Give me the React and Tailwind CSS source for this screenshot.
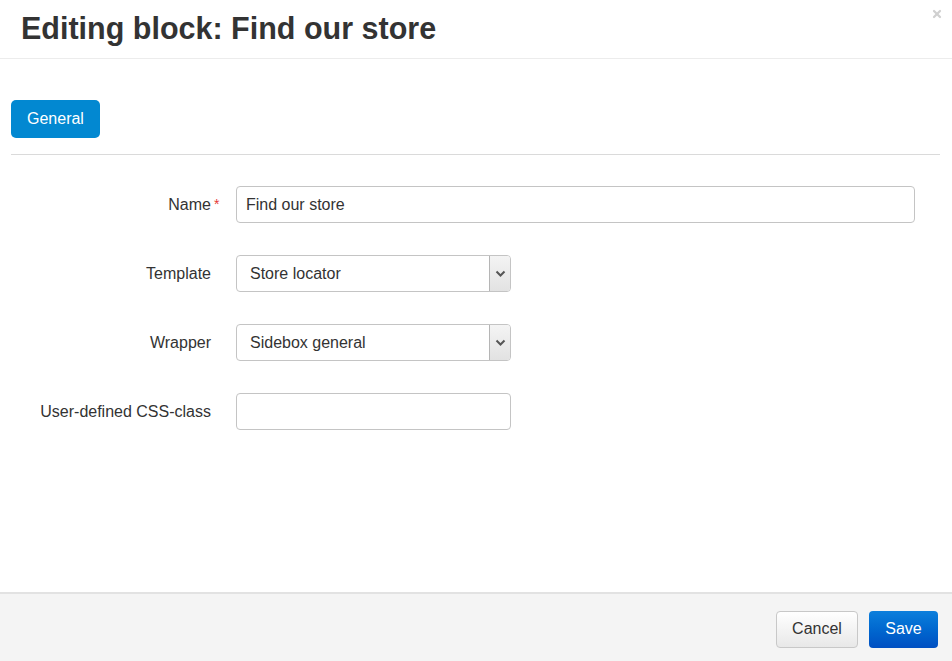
import { X } from 'lucide-react';

function SelectBox({ value }) {
  return (
    <div className="w-[275px] h-[37px] border border-[#c4c4c4] rounded-[4px] flex items-stretch bg-white overflow-hidden">
      <div className="flex-1 flex items-center pl-[13px] text-[16px] text-[#333]">{value}</div>
      <div className="w-[21px] border-l border-[#b5b5b5] bg-gradient-to-b from-[#f4f4f4] to-[#e2e2e2] flex items-center justify-center">
        <svg width="11" height="8" viewBox="0 0 11 8">
          <path d="M1.5 1.5 L5.5 5.5 L9.5 1.5" fill="none" stroke="#555" strokeWidth="2" />
        </svg>
      </div>
    </div>
  );
}

function Row({ label, required, children }) {
  return (
    <div className="flex items-center">
      <div className="w-[236px] pr-[25px] flex justify-end text-[16px] text-[#333]">
        <span className="relative">
          {label}
          {required && (
            <span className="absolute left-full top-[1px] ml-[3px] text-[#e53935] text-[14px]">*</span>
          )}
        </span>
      </div>
      {children}
    </div>
  );
}

export default function App() {
  return (
    <div className="w-[952px] h-[661px] bg-white flex flex-col font-['Liberation_Sans',Arial,sans-serif] text-[#333]">
      {/* Header */}
      <header className="h-[59px] shrink-0 border-b border-[#ececec] relative flex items-center pl-[21px]">
        <h1 className="text-[30.5px] font-bold text-[#333] leading-none -mt-[2px]">Editing block: Find our store</h1>
        <X className="absolute right-[9px] top-[8px] w-[12px] h-[12px] text-[#d0d0d0]" strokeWidth={4.5} />
      </header>

      {/* Body */}
      <div className="flex-1 px-[11px] pt-[41px]">
        <button className="h-[38px] px-[16px] bg-[#0288d1] text-white text-[16px] rounded-[5px]">General</button>
        <div className="mt-[16px] mr-[1px] border-t border-[#dadada]" />

        <div className="-ml-[11px] pt-[31px] flex flex-col gap-[32px]">
          <Row label="Name" required>
            <div className="w-[679px] h-[37px] border border-[#c4c4c4] rounded-[4px] flex items-center pl-[9px] text-[16px] text-[#333]">
              Find our store
            </div>
          </Row>
          <Row label="Template">
            <SelectBox value="Store locator" />
          </Row>
          <Row label="Wrapper">
            <SelectBox value="Sidebox general" />
          </Row>
          <Row label="User-defined CSS-class">
            <div className="w-[275px] h-[37px] border border-[#c4c4c4] rounded-[4px]" />
          </Row>
        </div>
      </div>

      {/* Footer */}
      <footer className="h-[69px] shrink-0 border-t-2 border-[#e2e2e2] bg-[#f4f4f4] flex items-center justify-end gap-[11px] pr-[14px] pt-[3px]">
        <button className="h-[37px] w-[82px] border border-[#c8c8c8] rounded-[4px] bg-gradient-to-b from-white to-[#e8e8e8] text-[16px] text-[#333]">Cancel</button>
        <button className="h-[37px] w-[69px] rounded-[4px] bg-gradient-to-b from-[#0d7fdc] to-[#004fc2] text-white text-[16px]">Save</button>
      </footer>
    </div>
  );
}
